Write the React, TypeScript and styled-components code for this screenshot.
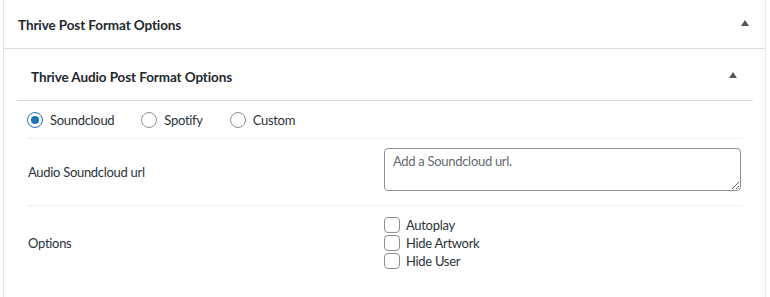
import styled, { createGlobalStyle } from "styled-components";

const Global = createGlobalStyle`
  body {
    margin: 0;
    background: #fff;
    font-family: Lato, "Noto Sans", sans-serif;
    color: #1d2327;
  }
`;

const Postbox = styled.div`
  margin-left: 3px;
  width: 761px;
  min-height: 297px;
  border-left: 1px solid #e6e7e9;
  border-right: 1px solid #e6e7e9;
  background: #fff;
`;

const Header = styled.div<{ $inner?: boolean }>`
  display: flex;
  align-items: center;
  justify-content: space-between;
  height: ${p => (p.$inner ? 52 : 49)}px;
  padding: ${p => (p.$inner ? "5px 16px 0 14px" : "2px 16px 0 14px")};
  border-bottom: 1px solid #dcdcde;
  box-sizing: border-box;
`;

const Title = styled.h2`
  margin: 0;
  font-size: 13.5px;
  font-weight: 700;
  letter-spacing: -0.1px;
  color: #23282d;
`;

const Toggle = styled.span`
  width: 0;
  height: 0;
  border-left: 4px solid transparent;
  border-right: 4px solid transparent;
  border-bottom: 6px solid #50575e;
  margin-bottom: 5px;
`;

const Body = styled.div`
  padding: 0 12px 0 13px;
`;

const Fields = styled.div`
  padding: 0 11px;
  font-size: 13px;
  letter-spacing: -0.3px;
  color: #2c3338;
`;

const Row = styled.div<{ $height: number }>`
  display: flex;
  align-items: center;
  min-height: ${p => p.$height}px;
  border-bottom: 1px dotted #e2e4e7;
  box-sizing: border-box;
`;

const LastRow = styled(Row)`
  border-bottom: none;
  align-items: flex-start;
`;

const Label = styled.div`
  width: 356px;
  align-self: center;
`;

const OptionsLabel = styled(Label)`
  margin-top: -4px;
`;

const RadioGroup = styled.div`
  display: flex;
  align-items: center;
  gap: 27px;
  margin-left: -1px;
  padding-top: 1px;
`;

const RadioItem = styled.label`
  display: flex;
  align-items: center;
  gap: 7px;
`;

const Radio = styled.span<{ $checked?: boolean }>`
  width: 16px;
  height: 16px;
  border-radius: 50%;
  border: 1px solid ${p => (p.$checked ? "#2271b1" : "#8c8f94")};
  box-sizing: border-box;
  display: flex;
  align-items: center;
  justify-content: center;
  &::after {
    content: "";
    display: ${p => (p.$checked ? "block" : "none")};
    width: 8px;
    height: 8px;
    border-radius: 50%;
    background: #2271b1;
  }
`;

const Url = styled.textarea`
  width: 357px;
  height: 43px;
  margin: 9px 0 14px;
  box-sizing: border-box;
  border: 1px solid #8c8f94;
  border-radius: 4px;
  padding: 4px 8px;
  font-family: inherit;
  font-size: 13px;
  letter-spacing: -0.3px;
  color: #1d2327;
  &::placeholder {
    color: #646970;
  }
`;

const Checks = styled.div`
  display: flex;
  flex-direction: column;
  gap: 2px;
  padding: 11px 0 14px;
`;

const CheckItem = styled.label`
  display: flex;
  align-items: center;
  gap: 6px;
  height: 16px;
`;

const Box = styled.span`
  width: 16px;
  height: 16px;
  box-sizing: border-box;
  border: 1px solid #8c8f94;
  border-radius: 4px;
`;

export default function App() {
  return (
    <>
      <Global />
      <Postbox>
        <Header>
          <Title>Thrive Post Format Options</Title>
          <Toggle />
        </Header>
        <Body>
          <Header $inner>
            <Title>Thrive Audio Post Format Options</Title>
            <Toggle />
          </Header>
          <Fields>
            <Row $height={38}>
              <RadioGroup>
                <RadioItem><Radio $checked />Soundcloud</RadioItem>
                <RadioItem><Radio />Spotify</RadioItem>
                <RadioItem><Radio />Custom</RadioItem>
              </RadioGroup>
            </Row>
            <Row $height={67}>
              <Label>Audio Soundcloud url</Label>
              <Url placeholder="Add a Soundcloud url." />
            </Row>
            <LastRow $height={70}>
              <OptionsLabel>Options</OptionsLabel>
              <Checks>
                <CheckItem><Box />Autoplay</CheckItem>
                <CheckItem><Box />Hide Artwork</CheckItem>
                <CheckItem><Box />Hide User</CheckItem>
              </Checks>
            </LastRow>
          </Fields>
        </Body>
      </Postbox>
    </>
  );
}
